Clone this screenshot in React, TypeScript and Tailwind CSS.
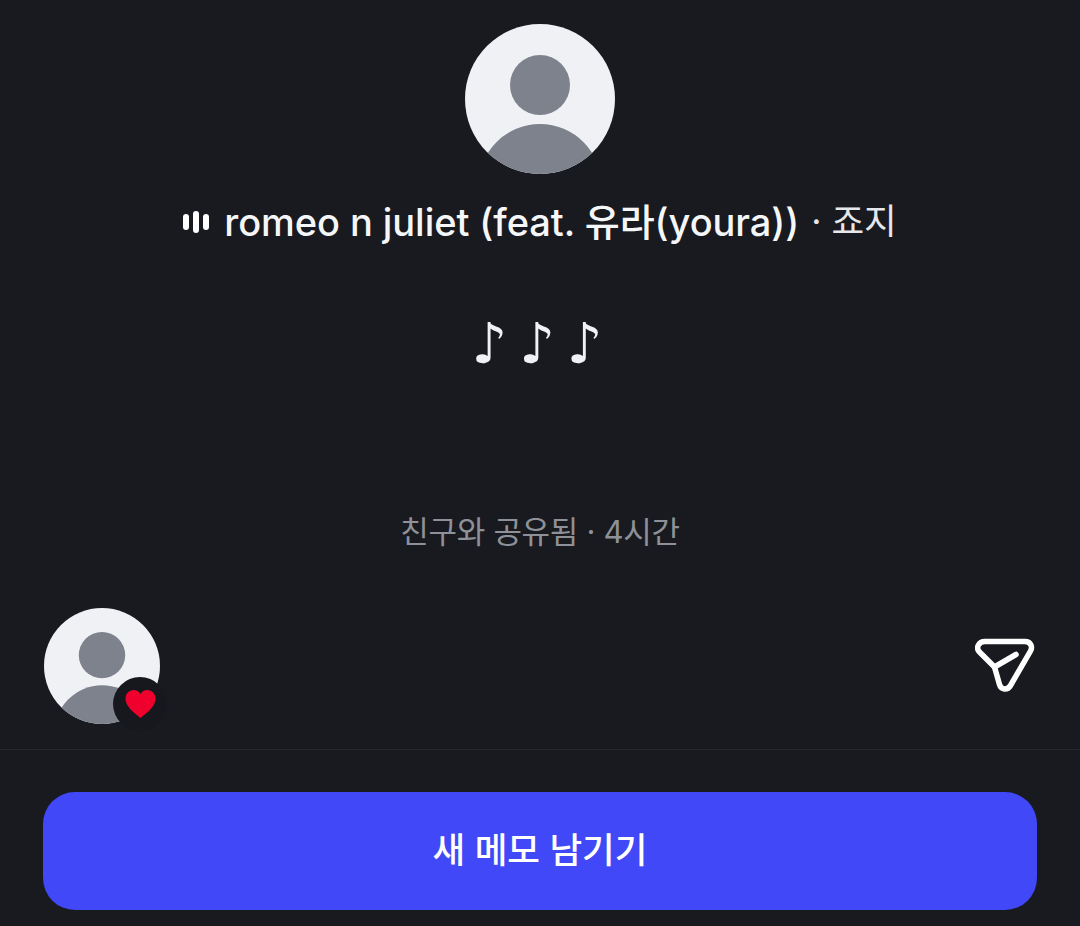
function Avatar({ className }: { className: string }) {
  return (
    <svg viewBox="0 0 150 150" className={className}>
      <defs>
        <clipPath id="avatar-clip">
          <circle cx="75" cy="75" r="75" />
        </clipPath>
      </defs>
      <circle cx="75" cy="75" r="75" fill="#eff1f5" />
      <g clipPath="url(#avatar-clip)" fill="#7d828c">
        <circle cx="75" cy="61" r="30" />
        <ellipse cx="75" cy="163" rx="62" ry="63" />
      </g>
    </svg>
  );
}

function SendIcon() {
  return (
    <svg viewBox="0 0 60 56" className="h-[56px] w-[60px]" fill="none" stroke="#ffffff" strokeWidth="5.5" strokeLinecap="round" strokeLinejoin="round">
      <path d="M10 3.5H50C55.5 3.5 58 8.5 55.5 13L35.5 47.5C32.5 52.5 26 52 24.5 46.5L19.5 29L4.5 14C0.5 10 3.5 3.5 10 3.5Z" />
      <path d="M19.5 29L41 16.5" />
    </svg>
  );
}

export default function App() {
  return (
    <div className="flex h-[926px] w-[1080px] flex-col items-center overflow-hidden bg-[#181a20] font-['Inter','Noto_Sans_CJK_KR',sans-serif] text-white">
      <Avatar className="mt-6 h-[150px] w-[150px]" />

      <div className="mt-[26px] flex h-[44px] items-center">
        <div className="mr-[15px] flex items-center gap-[4px]">
          <span className="h-[16px] w-[6px] rounded-full bg-white" />
          <span className="h-[22px] w-[6px] rounded-full bg-white" />
          <span className="h-[16px] w-[6px] rounded-full bg-white" />
        </div>
        <span className="text-[38px] font-medium tracking-[-0.06px] text-[#f5f6f8]">romeo n juliet (feat. 유라(youra))</span>
        <span className="ml-[12px] text-[35.5px] text-[#e6e7ea]">· 죠지</span>
      </div>

      <p className="mt-[70px] flex h-[60px] items-center pl-[6px] font-['DejaVu_Sans',sans-serif] text-[56px] font-bold tracking-[12px] text-[#f0f1f4]">♪♪♪</p>

      <p className="mt-[135px] text-[31px] tracking-[-0.3px] text-[#8e9197]">친구와 공유됨 · 4시간</p>

      <div className="mt-[52px] flex w-full items-center justify-between pl-11 pr-[45px]">
        <div className="relative h-[116px] w-[116px]">
          <Avatar className="h-[116px] w-[116px]" />
          <div className="absolute left-[69px] top-[69px] flex h-[54px] w-[54px] items-center justify-center rounded-full bg-[#16181e]">
            <svg viewBox="1 1 30 28" className="mt-px h-[28px] w-[31px]" fill="#f0002c">
              <path d="M16 29C13 26 1 19 1 9.5C1 4.5 5 1 9.2 1C12 1 14.6 2.4 16 5C17.4 2.4 20 1 22.8 1C27 1 31 4.5 31 9.5C31 19 19 26 16 29Z" />
            </svg>
          </div>
        </div>
        <SendIcon />
      </div>

      <div className="mt-[25px] h-px w-full bg-[#26282d]" />

      <div className="w-full px-[43px] pt-[42px]">
        <button className="flex h-[118px] w-full items-center justify-center rounded-[32px] bg-[#4048f8] text-[35.5px] font-medium text-white">
          새 메모 남기기
        </button>
      </div>
    </div>
  );
}
